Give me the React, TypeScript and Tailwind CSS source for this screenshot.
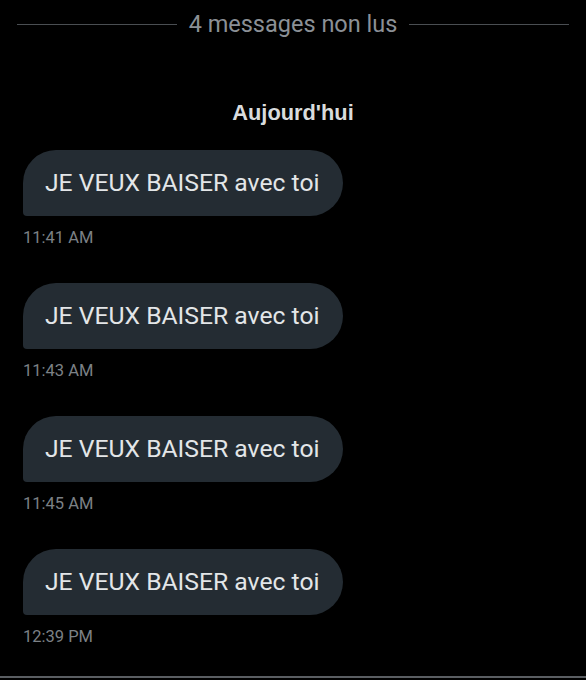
const messages = ["11:41 AM", "11:43 AM", "11:45 AM", "12:39 PM"]

export default function App() {
  return (
    <div className="w-[586px] h-[680px] bg-black flex flex-col overflow-hidden" style={{ fontFamily: "Roboto, 'Liberation Sans', sans-serif" }}>
      <div className="flex items-center gap-3 px-[17px] pt-[10px] h-[38px]">
        <div className="flex-1 h-px bg-[#4a4e52]" />
        <span className="text-[23.5px] leading-[28px] text-[#8b9096]">4 messages non lus</span>
        <div className="flex-1 h-px bg-[#4a4e52]" />
      </div>

      <div className="mt-[63px] text-center text-[21.8px] leading-[24px] font-bold text-[#d9dcdd]" style={{ fontFamily: "'Liberation Sans', Arial, sans-serif" }}>
        Aujourd'hui
      </div>

      <div className="flex flex-col px-[23px] mt-[25px] gap-[35px]">
        {messages.map((time) => (
          <div key={time} className="flex flex-col items-start">
            <div className="h-[66px] flex items-center pl-[22px] pr-[24px] rounded-[33px] rounded-bl-[4px] bg-[#242c33] text-[24.7px] text-[#e3e6e8]">
              JE VEUX BAISER avec toi
            </div>
            <span className="mt-[12px] text-[16.5px] leading-[20px] text-[#7c8186]">{time}</span>
          </div>
        ))}
      </div>

      <div className="mt-auto mb-[2px] h-[2px] bg-[#5a5e62]" />
    </div>
  )
}
